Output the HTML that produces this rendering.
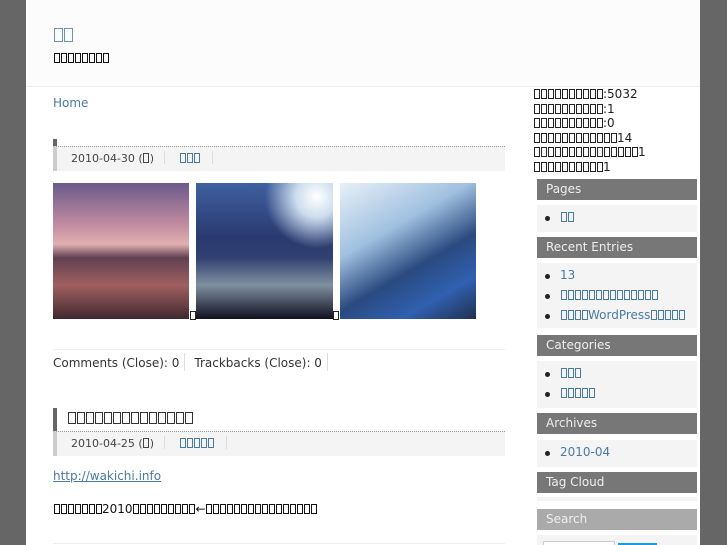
<!DOCTYPE html>
<html><head><meta charset="utf-8"><style>
*{margin:0;padding:0;box-sizing:border-box}
html,body{width:727px;height:545px;overflow:hidden}
body{background:#666;font-family:"DejaVu Sans","Liberation Sans","Noto Sans CJK JP",sans-serif;font-size:12px;color:#333;position:relative}
.a{position:absolute;white-space:nowrap}
#page{position:absolute;left:26px;top:0;width:674px;height:545px;background:#fff}
.b{display:inline-block;width:6px;height:10px;border:1px solid currentColor;margin:0 .5px 0 .5px;vertical-align:-1px;overflow:hidden;color:inherit;font-size:1px;line-height:1px;text-indent:20px}
.L .b{width:9px;height:14px;vertical-align:-2px}
.M .b{width:8px;height:12px;vertical-align:-1px}
.blue{color:#4a7aa0}
.wh{position:absolute;left:537px;width:160px;height:21px;background:#777;color:#eee;font-size:12px;line-height:21px;padding-left:9px}
.wb{position:absolute;left:537px;width:160px;background:#f4f4f4}
.li{position:absolute;left:8px;font-size:12px}
.li:before{content:"";position:absolute;left:0;top:6px;width:5px;height:5px;border-radius:50%;background:#222}
.li span.t{margin-left:15px}
.meta{position:absolute;left:53px;width:452px;background:#f4f4f4;border-top:1px dotted #999}
.sep{display:inline-block;width:1px;height:13px;background:#ddd;vertical-align:-2px;margin:0 10px}
</style></head><body>
<div id="page"></div>
<div class="a" style="left:26px;top:0;width:674px;height:86px;background:#fcfcfc"></div>
<div class="a" style="left:26px;top:86px;width:674px;height:1px;background:#eee"></div>
<div class="a j L" style="left:53px;top:24px;font-size:18px;color:#6a94b8">□□</div>
<div class="a j" style="left:53px;top:51px;color:#111">□□□□□□□□</div>
<div class="a blue" style="left:53px;top:96px;font-size:12px">Home</div>

<div class="a" style="left:53px;top:139px;width:4px;height:8px;background:#666"></div>
<div class="meta" style="top:146px;height:25px;border-left:4px solid #ccc"></div>
<div class="a" style="left:71px;top:151px;font-size:11px;color:#444">2010-04-30 (<span class="j">□</span>)<span class="sep" style="margin:0 14px 0 10px"></span><span class="j blue">□□□</span><span class="sep" style="margin:0 12px"></span></div>

<div class="a" style="left:53px;top:183px;width:136px;height:136px;background:linear-gradient(180deg,#6a5a8a 0%,#c08aa0 30%,#e0b0b0 45%,#604050 55%,#a06060 75%,#402830 100%)"></div>
<div class="a" style="left:196px;top:183px;width:137px;height:136px;background:radial-gradient(circle at 88% 10%,#fff 0,#cde 12%,transparent 30%),linear-gradient(180deg,#4060a0 0%,#2a3a70 40%,#304070 55%,#8090a0 75%,#101020 100%)"></div>
<div class="a" style="left:340px;top:183px;width:136px;height:136px;background:linear-gradient(150deg,#e8f0f8 0%,#a0c0e0 35%,#2a4a80 60%,#3060b0 80%,#203050 100%)"></div>
<div class="a" style="left:190px;top:311px;width:6px;height:9px;border:1px solid #222;background:#fff"></div>
<div class="a" style="left:333px;top:311px;width:6px;height:9px;border:1px solid #222;background:#fff"></div>

<div class="a" style="left:53px;top:349px;width:452px;height:1px;background:#eee"></div>
<div class="a" style="left:53px;top:353px;font-size:12px;color:#333;line-height:16px">Comments (Close): 0<span class="sep" style="height:18px;margin:0 9px 0 5px;vertical-align:-4px"></span>Trackbacks (Close): 0<span class="sep" style="height:18px;margin:0 9px 0 5px;vertical-align:-4px"></span></div>

<div class="a" style="left:53px;top:408px;width:4px;height:24px;background:#666"></div>
<div class="a j M" style="left:67px;top:411px;font-size:14px;color:#333">□□□□□□□□□□□□□□</div>
<div class="meta" style="top:431px;height:25px;border-left:4px solid #ccc"></div>
<div class="a" style="left:71px;top:436px;font-size:11px;color:#444">2010-04-25 (<span class="j">□</span>)<span class="sep" style="margin:0 14px 0 10px"></span><span class="j blue">□□□□□</span><span class="sep" style="margin:0 12px"></span></div>
<div class="a blue" style="left:53px;top:469px;text-decoration:underline">http://wakichi.info</div>
<div class="a j" style="left:53px;top:502px;color:#111">□□□□□□□2010□□□□□□□□□←□□□□□□□□□□□□□□□□</div>
<div class="a" style="left:53px;top:543px;width:452px;height:1px;background:#eee"></div>

<div class="a" style="left:533px;top:87px;line-height:14.5px;color:#222">
<div class="j">□□□□□□□□□□:5032</div><div class="j">□□□□□□□□□□:1</div><div class="j">□□□□□□□□□□:0</div><div class="j">□□□□□□□□□□□□14</div><div class="j">□□□□□□□□□□□□□□□1</div><div class="j">□□□□□□□□□□1</div></div>

<div class="wh" style="top:179px">Pages</div>
<div class="wb" style="top:205px;height:27px"><div class="li" style="top:5px"><span class="t j blue">□□</span></div></div>
<div class="wh" style="top:237px">Recent Entries</div>
<div class="wb" style="top:263px;height:65px">
<div class="li" style="top:5px"><span class="t blue">13</span></div>
<div class="li" style="top:25px"><span class="t j blue">□□□□□□□□□□□□□□</span></div>
<div class="li" style="top:45px"><span class="t blue"><span class="j">□□□□</span>WordPress<span class="j">□□□□□</span></span></div></div>
<div class="wh" style="top:335px">Categories</div>
<div class="wb" style="top:361px;height:47px">
<div class="li" style="top:5px"><span class="t j blue">□□□</span></div>
<div class="li" style="top:25px"><span class="t j blue">□□□□□</span></div></div>
<div class="wh" style="top:413px">Archives</div>
<div class="wb" style="top:440px;height:27px"><div class="li" style="top:5px"><span class="t blue">2010-04</span></div></div>
<div class="wh" style="top:472px">Tag Cloud</div>
<div class="wb" style="top:497px;height:4px"></div>
<div class="wh" style="top:509px;background:#aaa">Search</div>
<div class="wb" style="top:535px;height:10px"></div>
<div class="a" style="left:543px;top:541px;width:72px;height:4px;background:#fff;border:1px solid #ccc;border-bottom:0"></div>
<div class="a" style="left:618px;top:543px;width:39px;height:2px;background:#1a9ae0"></div>
<script>
document.querySelectorAll('.j').forEach(function(e){
  var w=document.createTreeWalker(e,NodeFilter.SHOW_TEXT),n,ns=[];
  while(n=w.nextNode())ns.push(n);
  ns.forEach(function(t){
    if(t.nodeValue.indexOf('□')<0)return;
    var f=document.createDocumentFragment();
    t.nodeValue.split(/(□)/).forEach(function(p){
      if(!p)return;
      if(p==='□'){var s=document.createElement('span');s.className='b';s.textContent='□';f.appendChild(s);}
      else f.appendChild(document.createTextNode(p));
    });
    t.parentNode.replaceChild(f,t);
  });
});
</script>
</body></html>
